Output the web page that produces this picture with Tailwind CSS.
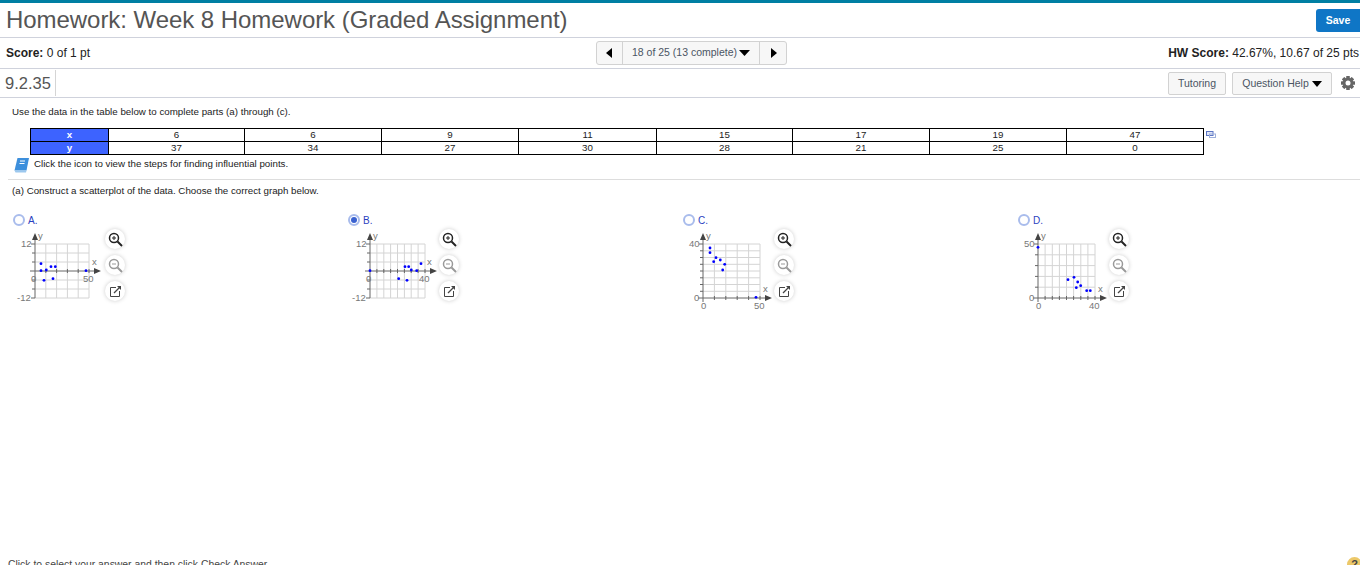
<!DOCTYPE html>
<html lang="en">
<head>
  <meta charset="UTF-8">
  <title>Homework: Week 8 Homework</title>
  <script src="https://cdn.jsdelivr.net/npm/@tailwindcss/browser@4"></script>
</head>
<body class="relative h-[565px] overflow-hidden bg-white font-['Liberation_Sans',Arial,sans-serif] text-[#222]">

  <!-- title -->
  <header class="h-[38px] border-t-[3px] border-b border-t-[#007fa3] border-b-[#cfd2dc] flex justify-between items-start">
    <h1 class="pl-[6px] text-[24px] tracking-[-0.05px] leading-[33px] text-[#555]">Homework: Week 8 Homework (Graded Assignment)</h1>
    <button class="mt-[6px] w-[44px] h-[23px] bg-[#0f76c6] rounded-l-[3px] text-white text-[10.5px] font-bold">Save</button>
  </header>

  <!-- score row -->
  <div class="h-[31px] border-b border-[#cfd2dc] relative flex justify-between items-center pl-[6px] pr-px text-[12px]">
    <div><b>Score:</b> 0 of 1 pt</div>
    <div class="absolute left-[596px] top-[3px] flex h-[24px] bg-[#f7f7f7] border border-[#d2d2d2] rounded-[3px] text-[#4b5563] text-[10.5px]">
      <button class="w-[25px] flex items-center justify-center"><svg width="7" height="10" viewBox="0 0 7 10"><path d="M6 0v10L0 5z" fill="#000"/></svg></button>
      <button class="w-[138px] border-x border-[#d2d2d2] flex items-center justify-center gap-[2px]">18 of 25 (13 complete)<svg width="11" height="6" viewBox="0 0 11 6"><path d="M0 0h11L5.500 6z" fill="#000"/></svg></button>
      <button class="w-[26px] flex items-center justify-center"><svg width="7" height="10" viewBox="0 0 7 10"><path d="M1 0v10l6-5z" fill="#000"/></svg></button>
    </div>
    <div><b>HW Score:</b> 42.67%, 10.67 of 25 pts</div>
  </div>

  <!-- question row -->
  <div class="h-[29px] border-b border-[#cfd2dc] flex items-center">
    <div class="ml-[5px] w-[51px] h-[26px] border-r border-[#d5d5d5] text-[16.5px] leading-[26px] text-[#555]">9.2.35</div>
    <div class="ml-auto flex items-center">
      <button class="w-[58px] h-[23px] pt-px bg-[#f7f7f7] border border-[#d2d2d2] rounded-[2px] text-[10.5px] text-[#4b5563]">Tutoring</button>
      <button class="ml-[6px] w-[100px] h-[23px] pt-px bg-[#f7f7f7] border border-[#d2d2d2] rounded-[2px] text-[10.5px] text-[#4b5563] flex items-center justify-center gap-[3px]">Question Help<svg width="10" height="6" viewBox="0 0 10 6"><path d="M0 0h10L5 6z" fill="#000"/></svg></button>
      <svg class="ml-[8px] mr-[4px]" width="16" height="16" viewBox="0 0 16 16">
        <g fill="#666"><rect x="6.200" y="1" width="3.600" height="14" rx="0.500"/><rect x="6.200" y="1" width="3.600" height="14" rx="0.500" transform="rotate(45 8 8)"/><rect x="6.200" y="1" width="3.600" height="14" rx="0.500" transform="rotate(90 8 8)"/><rect x="6.200" y="1" width="3.600" height="14" rx="0.500" transform="rotate(135 8 8)"/></g>
        <circle cx="8" cy="8" r="5.200" fill="#666"/>
        <circle cx="8" cy="8" r="2.500" fill="#fff"/>
      </svg>
    </div>
  </div>

  <!-- question -->
  <p class="pl-[12px] mt-[8px] text-[9.75px] leading-[12px]">Use the data in the table below to complete parts (a) through (c).</p>

  <div class="flex items-start ml-[30px] mt-[10px]">
    <table class="w-[1174px] h-[27px] table-fixed border-collapse border border-black text-[9.75px] leading-[12px] text-center">
      <colgroup><col class="w-[78px]"><col class="w-[136px]"><col class="w-[137px]"><col class="w-[137px]"><col class="w-[138px]"><col class="w-[136px]"><col class="w-[137px]"><col class="w-[137px]"><col></colgroup>
      <tbody>
        <tr class="h-[13px]">
          <th class="border border-black bg-[#3d63ff] text-white p-0">x</th>
          <td class="border border-black p-0">6</td><td class="border border-black p-0">6</td><td class="border border-black p-0">9</td><td class="border border-black p-0">11</td><td class="border border-black p-0">15</td><td class="border border-black p-0">17</td><td class="border border-black p-0">19</td><td class="border border-black p-0">47</td>
        </tr>
        <tr class="h-[13px]">
          <th class="border border-black bg-[#3d63ff] text-white p-0">y</th>
          <td class="border border-black p-0">37</td><td class="border border-black p-0">34</td><td class="border border-black p-0">27</td><td class="border border-black p-0">30</td><td class="border border-black p-0">28</td><td class="border border-black p-0">21</td><td class="border border-black p-0">25</td><td class="border border-black p-0">0</td>
        </tr>
      </tbody>
    </table>
    <svg class="ml-[2px] mt-[3px]" width="10" height="7" viewBox="0 0 10 7"><rect x="0.500" y="0.500" width="6.500" height="4" fill="#dfe6f7" stroke="#5b74c4"/><rect x="3.500" y="3" width="6" height="3.500" fill="none" stroke="#9fb0dc"/></svg>
  </div>

  <div class="flex items-center ml-[14px] mt-px h-[17px]">
    <svg width="16" height="16" viewBox="0 0 16 16">
      <path d="M3.500 1H15L12.500 13.500H.500z" fill="#3d8fdc"/>
      <path d="M.500 13.500h12L12 15.500H1.500z" fill="#9cc8ee"/>
      <path d="M6 4h5M5.500 6.500h5" stroke="#fff" stroke-width="1.200"/>
    </svg>
    <span class="ml-[4px] text-[9.75px]">Click the icon to view the steps for finding influential points.</span>
  </div>

  <div class="ml-[8px] mt-[6px] border-t border-[#ddd]"></div>

  <p class="pl-[12px] mt-[5px] text-[9.75px] leading-[12px]">(a) Construct a scatterplot of the data. Choose the correct graph below.</p>

  <!-- answer choices -->
  <div class="grid grid-cols-[335px_335px_335px_1fr] mt-[17px]">

    <div>
      <div class="flex items-center pl-[13px] h-[12px] gap-[3px] text-[10px] text-[#2a3fc0]"><span class="w-[12px] h-[12px] rounded-full border-2 border-[#a9bcec]"></span>A.</div>
      <div class="flex">
        <svg class="mt-[4px] w-[105px] h-[85px] shrink-0" viewBox="0 0 105 85" font-size="9.5" fill="#777">
          <path d="M45.800 14V68M56.600 14V68M67.400 14V68M78.200 14V68M89 14V68M35 14H89M35 23H89M35 32H89M35 50H89M35 59H89M35 68H89" stroke="#d4d4d4" fill="none"/>
          <path d="M35 9V68M31 14H35M31 68H35M32 23H35M32 32H35M32 50H35M32 59H35M30 41H97M45.800 39V43M56.600 39V43M67.400 39V43M78.200 39V43M89 39V43" stroke="#666" fill="none"/>
          <path d="M35 3l-3 7h6zM101 41l-7-3v6z" fill="#444"/>
          <text x="21" y="17">12</text><text x="17" y="71">-12</text><text x="31" y="52">0</text><text x="83" y="52">50</text><text x="92" y="35">x</text><text x="38" y="9">y</text>
          <g fill="#0000ff"><circle cx="41" cy="33.700" r="1.400"/><circle cx="41" cy="40.700" r="1.400"/><circle cx="46.300" cy="40" r="1.400"/><circle cx="51" cy="36.700" r="1.400"/><circle cx="55.300" cy="36.700" r="1.400"/><circle cx="44" cy="50.300" r="1.400"/><circle cx="53" cy="48.700" r="1.400"/><circle cx="86" cy="40.700" r="1.400"/></g>
        </svg>
        <div class="flex flex-col gap-[6px] shrink-0 mt-[3px]">
          <button class="w-[20px] h-[20px] rounded-full bg-white shadow-[0_0_4px_#ccc] flex items-center justify-center"><svg width="15" height="15" viewBox="0 0 15 15" fill="none" stroke="#222"><circle cx="6" cy="6" r="4.500" stroke-width="1.500"/><path d="M9.500 9.500L14 14" stroke-width="2"/><path d="M4 6h4M6 4v4"/></svg></button>
          <button class="w-[20px] h-[20px] rounded-full bg-white shadow-[0_0_4px_#ccc] flex items-center justify-center"><svg width="15" height="15" viewBox="0 0 15 15" fill="none" stroke="#999"><circle cx="6" cy="6" r="4.500" stroke-width="1.500"/><path d="M9.500 9.500L14 14" stroke-width="2"/><path d="M4 6h4"/></svg></button>
          <button class="w-[20px] h-[20px] rounded-full bg-white shadow-[0_0_4px_#ccc] flex items-center justify-center"><svg width="13" height="13" viewBox="0 0 13 13" fill="none" stroke="#444"><path d="M7 2.500H1.500V11.500H10.500V6"/><path d="M5 8L10.500 2.500" stroke-width="1.200"/><path d="M8 1h4v4z" fill="#444" stroke="none"/></svg></button>
        </div>
      </div>
    </div>

    <div>
      <div class="flex items-center pl-[13px] h-[12px] gap-[3px] text-[10px] text-[#2a3fc0]"><span class="w-[12px] h-[12px] rounded-full border-2 border-[#a9bcec] flex items-center justify-center"><span class="w-[6px] h-[6px] rounded-full bg-[#3b62d0]"></span></span>B.</div>
      <div class="flex">
        <svg class="mt-[4px] w-[104px] h-[85px] shrink-0" viewBox="0 0 104 85" font-size="9.5" fill="#777">
          <path d="M41.900 14V68M48.800 14V68M55.600 14V68M62.500 14V68M69.400 14V68M76.200 14V68M83.100 14V68M90 14V68M35 14H90M35 23H90M35 32H90M35 50H90M35 59H90M35 68H90" stroke="#d4d4d4" fill="none"/>
          <path d="M35 9V68M31 14H35M31 68H35M32 23H35M32 32H35M32 50H35M32 59H35M30 41H97M41.900 39V43M48.800 39V43M55.600 39V43M62.500 39V43M69.400 39V43M76.200 39V43M83.100 39V43M90 39V43" stroke="#666" fill="none"/>
          <path d="M35 3l-3 7h6zM102 41l-7-3v6z" fill="#444"/>
          <text x="21" y="17">12</text><text x="17" y="71">-12</text><text x="31" y="52">0</text><text x="84" y="52">40</text><text x="92" y="35">x</text><text x="38" y="9">y</text>
          <g fill="#0000ff"><circle cx="63.700" cy="48.700" r="1.400"/><circle cx="70" cy="36.700" r="1.400"/><circle cx="73.700" cy="36.700" r="1.400"/><circle cx="76.300" cy="40" r="1.400"/><circle cx="81.700" cy="40.700" r="1.400"/><circle cx="72" cy="50.300" r="1.400"/><circle cx="86" cy="33.700" r="1.400"/><circle cx="35" cy="40.700" r="1.400"/></g>
        </svg>
        <div class="flex flex-col gap-[6px] shrink-0 mt-[3px]">
          <button class="w-[20px] h-[20px] rounded-full bg-white shadow-[0_0_4px_#ccc] flex items-center justify-center"><svg width="15" height="15" viewBox="0 0 15 15" fill="none" stroke="#222"><circle cx="6" cy="6" r="4.500" stroke-width="1.500"/><path d="M9.500 9.500L14 14" stroke-width="2"/><path d="M4 6h4M6 4v4"/></svg></button>
          <button class="w-[20px] h-[20px] rounded-full bg-white shadow-[0_0_4px_#ccc] flex items-center justify-center"><svg width="15" height="15" viewBox="0 0 15 15" fill="none" stroke="#999"><circle cx="6" cy="6" r="4.500" stroke-width="1.500"/><path d="M9.500 9.500L14 14" stroke-width="2"/><path d="M4 6h4"/></svg></button>
          <button class="w-[20px] h-[20px] rounded-full bg-white shadow-[0_0_4px_#ccc] flex items-center justify-center"><svg width="13" height="13" viewBox="0 0 13 13" fill="none" stroke="#444"><path d="M7 2.500H1.500V11.500H10.500V6"/><path d="M5 8L10.500 2.500" stroke-width="1.200"/><path d="M8 1h4v4z" fill="#444" stroke="none"/></svg></button>
        </div>
      </div>
    </div>

    <div>
      <div class="flex items-center pl-[13px] h-[12px] gap-[3px] text-[10px] text-[#2a3fc0]"><span class="w-[12px] h-[12px] rounded-full border-2 border-[#a9bcec]"></span>C.</div>
      <div class="flex">
        <svg class="mt-[4px] w-[104px] h-[85px] shrink-0" viewBox="0 0 104 85" font-size="9.5" fill="#777">
          <path d="M44.400 14V68M55.800 14V68M67.200 14V68M78.600 14V68M90 14V68M33 14H90M33 20.800H90M33 27.500H90M33 34.300H90M33 41H90M33 47.800H90M33 54.500H90M33 61.300H90" stroke="#d4d4d4" fill="none"/>
          <path d="M33 9V72M29 14H33M30 20.800H33M30 27.500H33M30 34.300H33M30 41H33M30 47.800H33M30 54.500H33M30 61.300H33M28 68H97M44.400 66V70M55.800 66V70M67.200 66V70M78.600 66V70M90 66V70" stroke="#666" fill="none"/>
          <path d="M33 3l-3 7h6zM102 68l-7-3v6z" fill="#444"/>
          <text x="19" y="17">40</text><text x="24" y="71">0</text><text x="31" y="79">0</text><text x="84" y="79">50</text><text x="93" y="62">x</text><text x="36" y="9">y</text>
          <g fill="#0000ff"><circle cx="40" cy="18" r="1.400"/><circle cx="40" cy="22.700" r="1.400"/><circle cx="46" cy="27.700" r="1.400"/><circle cx="43.700" cy="31.700" r="1.400"/><circle cx="50.300" cy="30" r="1.400"/><circle cx="54.700" cy="34.300" r="1.400"/><circle cx="52.700" cy="40" r="1.400"/><circle cx="86" cy="67.300" r="1.400"/></g>
        </svg>
        <div class="flex flex-col gap-[6px] shrink-0 mt-[3px]">
          <button class="w-[20px] h-[20px] rounded-full bg-white shadow-[0_0_4px_#ccc] flex items-center justify-center"><svg width="15" height="15" viewBox="0 0 15 15" fill="none" stroke="#222"><circle cx="6" cy="6" r="4.500" stroke-width="1.500"/><path d="M9.500 9.500L14 14" stroke-width="2"/><path d="M4 6h4M6 4v4"/></svg></button>
          <button class="w-[20px] h-[20px] rounded-full bg-white shadow-[0_0_4px_#ccc] flex items-center justify-center"><svg width="15" height="15" viewBox="0 0 15 15" fill="none" stroke="#999"><circle cx="6" cy="6" r="4.500" stroke-width="1.500"/><path d="M9.500 9.500L14 14" stroke-width="2"/><path d="M4 6h4"/></svg></button>
          <button class="w-[20px] h-[20px] rounded-full bg-white shadow-[0_0_4px_#ccc] flex items-center justify-center"><svg width="13" height="13" viewBox="0 0 13 13" fill="none" stroke="#444"><path d="M7 2.500H1.500V11.500H10.500V6"/><path d="M5 8L10.500 2.500" stroke-width="1.200"/><path d="M8 1h4v4z" fill="#444" stroke="none"/></svg></button>
        </div>
      </div>
    </div>

    <div>
      <div class="flex items-center pl-[13px] h-[12px] gap-[3px] text-[10px] text-[#2a3fc0]"><span class="w-[12px] h-[12px] rounded-full border-2 border-[#a9bcec]"></span>D.</div>
      <div class="flex">
        <svg class="mt-[4px] w-[104px] h-[85px] shrink-0" viewBox="0 0 104 85" font-size="9.5" fill="#777">
          <path d="M40.100 14V68M47.300 14V68M54.400 14V68M61.500 14V68M68.600 14V68M75.800 14V68M82.900 14V68M90 14V68M33 14H90M33 24.800H90M33 35.600H90M33 46.400H90M33 57.200H90" stroke="#d4d4d4" fill="none"/>
          <path d="M33 9V72M29 14H33M30 24.800H33M30 35.600H33M30 46.400H33M30 57.200H33M28 68H97M40.100 66V70M47.300 66V70M54.400 66V70M61.500 66V70M68.600 66V70M75.800 66V70M82.900 66V70M90 66V70" stroke="#666" fill="none"/>
          <path d="M33 3l-3 7h6zM102 68l-7-3v6z" fill="#444"/>
          <text x="19" y="17">50</text><text x="24" y="71">0</text><text x="31" y="79">0</text><text x="84" y="79">40</text><text x="93" y="62">x</text><text x="36" y="9">y</text>
          <g fill="#0000ff"><circle cx="33" cy="17.300" r="1.400"/><circle cx="63" cy="49.700" r="1.400"/><circle cx="69" cy="47.300" r="1.400"/><circle cx="72.700" cy="52" r="1.400"/><circle cx="75.700" cy="55.700" r="1.400"/><circle cx="71.300" cy="57.700" r="1.400"/><circle cx="81.700" cy="60.700" r="1.400"/><circle cx="85.300" cy="60.700" r="1.400"/></g>
        </svg>
        <div class="flex flex-col gap-[6px] shrink-0 mt-[3px]">
          <button class="w-[20px] h-[20px] rounded-full bg-white shadow-[0_0_4px_#ccc] flex items-center justify-center"><svg width="15" height="15" viewBox="0 0 15 15" fill="none" stroke="#222"><circle cx="6" cy="6" r="4.500" stroke-width="1.500"/><path d="M9.500 9.500L14 14" stroke-width="2"/><path d="M4 6h4M6 4v4"/></svg></button>
          <button class="w-[20px] h-[20px] rounded-full bg-white shadow-[0_0_4px_#ccc] flex items-center justify-center"><svg width="15" height="15" viewBox="0 0 15 15" fill="none" stroke="#999"><circle cx="6" cy="6" r="4.500" stroke-width="1.500"/><path d="M9.500 9.500L14 14" stroke-width="2"/><path d="M4 6h4"/></svg></button>
          <button class="w-[20px] h-[20px] rounded-full bg-white shadow-[0_0_4px_#ccc] flex items-center justify-center"><svg width="13" height="13" viewBox="0 0 13 13" fill="none" stroke="#444"><path d="M7 2.500H1.500V11.500H10.500V6"/><path d="M5 8L10.500 2.500" stroke-width="1.200"/><path d="M8 1h4v4z" fill="#444" stroke="none"/></svg></button>
        </div>
      </div>
    </div>
  </div>

  <!-- bottom hint, cut off by the window -->
  <p class="pl-[8px] mt-[244px] text-[10.4px] leading-[12px] text-[#444]">Click to select your answer and then click Check Answer.</p>
  <div class="absolute left-[1347px] top-[557px] w-[15px] h-[15px] rounded-full bg-[#ecc869] text-[#444] text-[11px] font-bold leading-[15px] text-center">?</div>
</body>
</html>
